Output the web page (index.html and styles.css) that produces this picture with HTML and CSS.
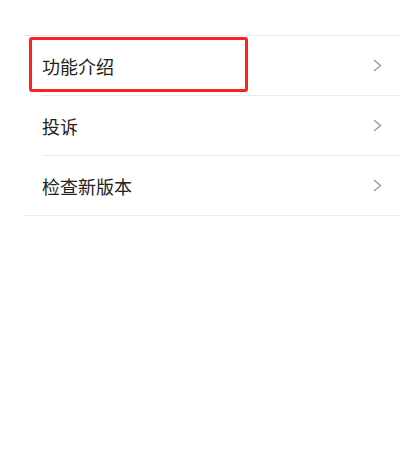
FILE: index.html
```html
<!DOCTYPE html>
<html lang="zh">
<head>
<meta charset="utf-8">
<link rel="stylesheet" href="styles.css">
</head>
<body>
<div class="list">
  <div class="item">
    <div class="inner"><span class="label">功能介绍</span><svg class="chev" width="9" height="13" viewBox="0 0 9 13"><path d="M1 1 L7.5 6.5 L1 12" fill="none" stroke="#a0a0a0" stroke-width="1.5"/></svg></div>
    <div class="mark"></div>
  </div>
  <div class="item">
    <div class="inner"><span class="label">投诉</span><svg class="chev" width="9" height="13" viewBox="0 0 9 13"><path d="M1 1 L7.5 6.5 L1 12" fill="none" stroke="#a0a0a0" stroke-width="1.5"/></svg></div>
  </div>
  <div class="item">
    <div class="inner last"><span class="label">检查新版本</span><svg class="chev" width="9" height="13" viewBox="0 0 9 13"><path d="M1 1 L7.5 6.5 L1 12" fill="none" stroke="#a0a0a0" stroke-width="1.5"/></svg></div>
  </div>
</div>
</body>
</html>
```
FILE: styles.css
```css
html, body {
  margin: 0;
  padding: 0;
  background: #ffffff;
}
body {
  font-family: "Noto Sans CJK SC", "Noto Sans", sans-serif;
  width: 400px;
  height: 449px;
  overflow: hidden;
}
.list {
  margin-top: 35px;
  margin-left: 24px;
  border-top: 1px solid #ececec;
  border-bottom: 1px solid #ececec;
}
.item {
  position: relative;
  padding-left: 18px;
}
.inner {
  height: 59px;
  display: flex;
  align-items: center;
  justify-content: space-between;
  padding-right: 18px;
  border-bottom: 1px solid #ececec;
}
.inner.last {
  border-bottom: none;
}
.label {
  font-size: 18px;
  color: #222222;
  line-height: 1;
}
.chev {
  display: block;
}
.mark {
  position: absolute;
  left: 5px;
  top: 1px;
  width: 213px;
  height: 49px;
  border: 3px solid #ff2020;
  border-radius: 3px;
}
```
